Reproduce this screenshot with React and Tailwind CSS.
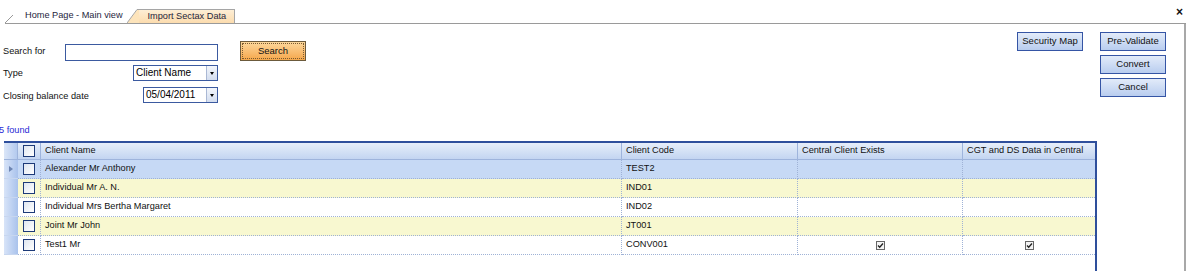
import React from 'react';

const font = "font-['Liberation_Sans',Arial,sans-serif]";

const rows = [
    { name: 'Alexander Mr Anthony', code: 'TEST2', tone: 'selected' },
    { name: 'Individual Mr A. N.', code: 'IND01', tone: 'alt' },
    { name: 'Individual Mrs Bertha Margaret', code: 'IND02', tone: 'plain' },
    { name: 'Joint Mr John', code: 'JT001', tone: 'alt' },
    { name: 'Test1 Mr', code: 'CONV001', tone: 'plain', exists: true, cgt: true },
];

const toneClass = {
    selected: 'bg-[#c6d9f5]',
    alt: 'bg-[#f8f8d0]',
    plain: 'bg-white',
};

const cols = 'grid grid-cols-[14px_23px_581px_176px_165px_1fr]';

const CheckBox = () => (
    <div className="w-[12px] h-[12px] border border-[#1d3a78] bg-gradient-to-br from-[#dfe6f0] to-white" />
);

const Ticked = () => (
    <svg width="9" height="9" viewBox="0 0 9 9">
        <rect x="0.5" y="0.5" width="8" height="8" fill="#f4f4f4" stroke="#666" />
        <path d="M2 4.5 L3.7 6.3 L7 2.5" fill="none" stroke="#222" strokeWidth="1.3" />
    </svg>
);

const BlueButton = ({ children, className = '' }) => (
    <button className={`h-[19px] w-[66px] border border-[#3555a5] bg-gradient-to-b from-[#e2ebf9] to-[#b9cdef] text-[9.5px] text-[#111] flex items-center justify-center ${className}`}>
        {children}
    </button>
);

const Combo = ({ value, width }) => (
    <div className={`h-[16px] ${width} border border-[#3b5aa0] bg-white flex items-stretch`}>
        <span className="flex-1 pl-[2px] text-[10px] leading-[14px] text-black">{value}</span>
        <span className="w-[11px] border-l border-[#aab8d4] bg-gradient-to-b from-[#f3f6fb] to-[#d3ddef] flex items-center justify-center">
            <span className="w-0 h-0 border-l-[2.5px] border-r-[2.5px] border-t-[3px] border-l-transparent border-r-transparent border-t-black" />
        </span>
    </div>
);

const App = () => {
    return (
        <div className={`w-[1187px] h-[271px] bg-white overflow-hidden ${font} text-[9.2px] text-[#111]`}>
            {/* tab strip */}
            <div className="h-[24px] flex items-end relative">
                <div className="flex items-end ml-[5px] flex-1 border-b border-[#9a9a9a] mr-[1px]">
                    <div className="relative h-[14px] pl-[20px] pr-[6px] flex items-center">
                        <svg className="absolute left-0 bottom-0" width="9" height="9" viewBox="0 0 9 9">
                            <path d="M0 9 L8 1" stroke="#999" />
                        </svg>
                        <span className="text-[#1e1e3c]">Home Page - Main view</span>
                    </div>
                    <div className="relative h-[14px] flex items-stretch -ml-[2px]">
                        <svg className="absolute left-0 bottom-0" width="12" height="14" viewBox="0 0 12 14">
                            <path d="M0 14 L10 1 L12 1 L12 14 Z" fill="#fde4bb" />
                            <path d="M0 14 L10 0.5 L12 0.5" stroke="#a5a5a5" fill="none" />
                        </svg>
                        <div className="ml-[12px] pl-[9px] pr-[8px] bg-gradient-to-b from-[#fdeed5] to-[#fcdcae] border-t border-r border-[#a5a5a5] flex items-center">
                            <span className="text-[#1e1e3c]">Import Sectax Data</span>
                        </div>
                    </div>
                </div>
                <span className="absolute right-[4px] top-[6px] text-[12px] font-bold leading-none">×</span>
            </div>

            {/* body */}
            <div className="flex h-[247px] mr-[1px] border-r-2 border-[#a8a8a8]">
                <div className="w-[1097px] pt-[8px] pl-[3px] flex flex-col">
                    <div className="flex items-start">
                        <div className="flex items-start mt-[9px]">
                            <div className="w-[215px] flex flex-col">
                                <div className="h-[20px] flex items-end justify-between">
                                    <span className="mb-[2px]">Search for</span>
                                    <div className="w-[153px] h-[17px] border border-[#3b5aa0] bg-white" />
                                </div>
                                <div className="mt-[4px] h-[16px] flex items-center justify-between">
                                    <span className="mt-[2px]">Type</span>
                                    <Combo value="Client Name" width="w-[85px]" />
                                </div>
                                <div className="mt-[6px] h-[16px] flex items-center justify-between">
                                    <span className="mt-[3px]">Closing balance date</span>
                                    <Combo value="05/04/2011" width="w-[75px]" />
                                </div>
                            </div>
                            <button className="ml-[22px] w-[66px] h-[20px] border border-[#6b5a3c] bg-gradient-to-b from-[#fcd79a] to-[#f5a74a] flex items-center justify-center text-[9.5px]">
                                <span className="border border-dotted border-[#7a5a30] w-[62px] h-[16px] flex items-center justify-center">Search</span>
                            </button>
                        </div>
                        <BlueButton className="ml-auto mr-[14px]">Security Map</BlueButton>
                    </div>

                    <div className="mt-[21px] -ml-[4px] text-[#2a2ad6] leading-[13px]">5 found</div>

                    {/* grid */}
                    <div className="mt-[4px] ml-[1px] flex-1 border-t-2 border-r-2 border-[#2e4f9c] bg-white">
                        <div className={`${cols} h-[17px] bg-gradient-to-b from-[#e6eefa] to-[#c3d5f1] border-b border-[#9eb4dc]`}>
                            <div className="bg-gradient-to-r from-[#dbe6f8] to-[#b4caee] border-r border-[#9eb4dc]" />
                            <div className="flex items-center justify-center border-r border-[#9eb4dc]">
                                <CheckBox />
                            </div>
                            <div className="flex items-center pl-[4px] border-r border-[#9eb4dc]">Client Name</div>
                            <div className="flex items-center pl-[4px] border-r border-[#9eb4dc]">Client Code</div>
                            <div className="flex items-center pl-[4px] border-r border-[#9eb4dc]">Central Client Exists</div>
                            <div className="flex items-center pl-[4px]">CGT and DS Data in Central</div>
                        </div>
                        {rows.map((r, i) => (
                            <div key={i} className={`${cols} h-[19px]`}>
                                <div className="bg-gradient-to-r from-[#d8e4f8] to-[#a9c2ec] border-b border-[#c7d6ef] flex items-center justify-center">
                                    {r.tone === 'selected' && (
                                        <span className="w-0 h-0 border-t-[3.5px] border-b-[3.5px] border-l-[4px] border-t-transparent border-b-transparent border-l-[#6d85b3]" />
                                    )}
                                </div>
                                <div className={`${toneClass[r.tone]} flex items-center justify-center border-b border-r border-dotted border-[#9fb2d6]`}>
                                    <CheckBox />
                                </div>
                                <div className={`${toneClass[r.tone]} flex items-center pl-[4px] border-b border-r border-dotted border-[#9fb2d6]`}>{r.name}</div>
                                <div className={`${toneClass[r.tone]} flex items-center pl-[4px] border-b border-r border-dotted border-[#9fb2d6]`}>{r.code}</div>
                                <div className={`${toneClass[r.tone]} flex items-center justify-center border-b border-r border-dotted border-[#9fb2d6]`}>
                                    {r.exists && <Ticked />}
                                </div>
                                <div className={`${toneClass[r.tone]} flex items-center justify-center border-b border-dotted border-[#9fb2d6]`}>
                                    {r.cgt && <Ticked />}
                                </div>
                            </div>
                        ))}
                    </div>
                </div>

                <div className="pl-[3px] pt-[8px] flex flex-col gap-[4px]">
                    <BlueButton>Pre-Validate</BlueButton>
                    <BlueButton>Convert</BlueButton>
                    <BlueButton>Cancel</BlueButton>
                </div>
            </div>
        </div>
    );
};

export default App;
